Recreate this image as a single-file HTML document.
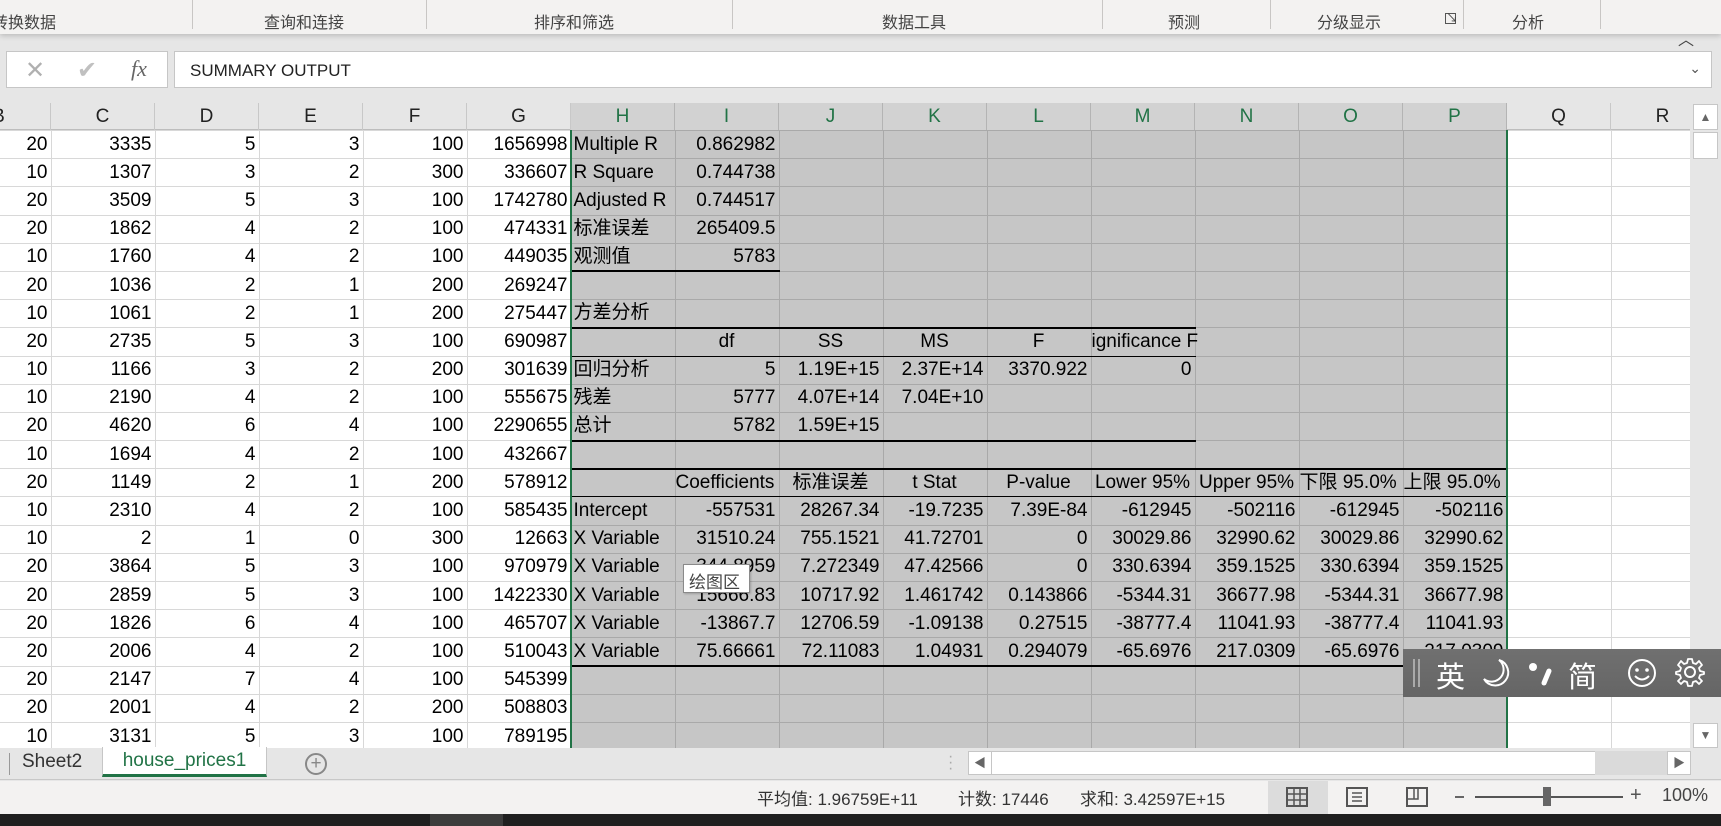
<!DOCTYPE html>
<html><head><meta charset="utf-8"><style>
*{margin:0;padding:0;box-sizing:border-box}
body{width:1721px;height:826px;overflow:hidden;background:#e6e6e6;font-family:"Liberation Sans","Noto Sans CJK SC",sans-serif;position:relative;color:#000}
.abs{position:absolute}
#rib{left:0;top:0;width:1721px;height:34px;background:#f3f2f1;box-shadow:0 2px 5px rgba(0,0,0,.18)}
.rl{position:absolute;top:9px;font-size:16px;color:#444;white-space:nowrap}
.sep{position:absolute;top:0;width:1px;height:29px;background:#c8c6c4}
#nb{left:6px;top:51px;width:162px;height:37px;background:#fff;border:1px solid #c6c6c6}
#fi{left:174px;top:51px;width:1538px;height:37px;background:#fff;border:1px solid #c6c6c6;font-size:17px;color:#222;padding:9px 0 0 15px}
#hdr{left:0;top:103px;width:1690px;height:27px;background:#e6e6e6;border-bottom:1px solid #bdbdbd}
.ch{position:absolute;top:0;height:27px;border-right:1px solid #c8c8c8;font-size:19px;color:#222;text-align:center;line-height:28px}
.ch.s{background:#d2d2d2;color:#217346;border-right-color:#b4b4b4}
#grid{left:0;top:130px;width:1690px;height:618px;overflow:hidden;background:#fff}
table{border-collapse:collapse;table-layout:fixed;font-size:19px;width:1715px}
td{height:28.2px;border:1px solid #d8d8d8;text-align:right;padding:0 3px 0 2px;white-space:nowrap;overflow:hidden;line-height:26px}
td:first-child{border-left:none}
td:nth-child(n+7):nth-child(-n+15){background:#c6c6c6;border-color:#a9a9a9}
td.l{text-align:left}
td.c{text-align:center}
td.v{overflow:visible}
tr.b1 td:nth-child(n+7):nth-child(-n+8){border-bottom:2px solid #000}
tr.b2 td:nth-child(n+7):nth-child(-n+12){border-bottom:2px solid #000}
tr.b3 td:nth-child(n+7):nth-child(-n+12){border-bottom:1px solid #000}
tr.b4 td:nth-child(n+7):nth-child(-n+15){border-bottom:2px solid #000}
tr.b5 td:nth-child(n+7):nth-child(-n+15){border-bottom:1px solid #000}
.gl{width:2px;background:#217346;top:130px;height:618px}
#vs{left:1690px;top:103px;width:31px;height:645px;background:#e6e6e6}
#tabs{left:0;top:748px;width:1721px;height:32px;background:#e6e6e6;border-bottom:1px solid #c8c8c8}
#stat{left:0;top:781px;width:1721px;height:33px;background:#f3f2f1;font-size:16px;color:#333}
#task{left:0;top:814px;width:1721px;height:12px;background:#1f1f1f}
#ime{left:1403px;top:649px;width:318px;height:48px;background:linear-gradient(#707070,#656565);color:#fff;font-size:29px}
</style></head><body>
<div id="rib" class="abs">
<div class="rl" style="left:-8px">转换数据</div>
<div class="sep" style="left:192px"></div>
<div class="rl" style="left:264px">查询和连接</div>
<div class="sep" style="left:426px"></div>
<div class="rl" style="left:534px">排序和筛选</div>
<div class="sep" style="left:732px"></div>
<div class="rl" style="left:882px">数据工具</div>
<div class="sep" style="left:1102px"></div>
<div class="rl" style="left:1168px">预测</div>
<div class="sep" style="left:1270px"></div>
<div class="rl" style="left:1317px">分级显示</div>
<div class="rl" style="left:1445px;font-size:12px;top:13px;border:1px solid #555;width:11px;height:11px;line-height:9px;text-align:center">↘</div>
<div class="sep" style="left:1463px"></div>
<div class="rl" style="left:1512px">分析</div>
<div class="sep" style="left:1600px"></div>
</div>
<div class="abs" style="left:1678px;top:26px;font-size:16px;color:#444">︿</div>
<div id="nb" class="abs">
<span class="abs" style="left:18px;top:4px;font-size:24px;color:#b0b0b0">✕</span>
<span class="abs" style="left:70px;top:4px;font-size:24px;color:#c0c0c0">✔</span>
<span class="abs" style="left:124px;top:4px;font-size:22px;color:#666;font-style:italic;font-family:'Liberation Serif',serif">fx</span>
</div>
<div id="fi" class="abs">SUMMARY OUTPUT<span class="abs" style="right:10px;top:8px;font-size:14px;color:#555">⌄</span></div>
<div id="hdr" class="abs">
<div class="ch" style="left:-53px;width:104px">B</div>
<div class="ch" style="left:51px;width:104px">C</div>
<div class="ch" style="left:155px;width:104px">D</div>
<div class="ch" style="left:259px;width:104px">E</div>
<div class="ch" style="left:363px;width:104px">F</div>
<div class="ch" style="left:467px;width:104px">G</div>
<div class="ch s" style="left:571px;width:104px">H</div>
<div class="ch s" style="left:675px;width:104px">I</div>
<div class="ch s" style="left:779px;width:104px">J</div>
<div class="ch s" style="left:883px;width:104px">K</div>
<div class="ch s" style="left:987px;width:104px">L</div>
<div class="ch s" style="left:1091px;width:104px">M</div>
<div class="ch s" style="left:1195px;width:104px">N</div>
<div class="ch s" style="left:1299px;width:104px">O</div>
<div class="ch s" style="left:1403px;width:104px">P</div>
<div class="ch" style="left:1507px;width:104px">Q</div>
<div class="ch" style="left:1611px;width:104px">R</div>
</div>
<div id="grid" class="abs">
<table>
<colgroup><col style="width:51px"><col style="width:104px"><col style="width:104px"><col style="width:104px"><col style="width:104px"><col style="width:104px"><col style="width:104px"><col style="width:104px"><col style="width:104px"><col style="width:104px"><col style="width:104px"><col style="width:104px"><col style="width:104px"><col style="width:104px"><col style="width:104px"><col style="width:104px"><col style="width:104px"></colgroup>
<tr><td>20<td>3335<td>5<td>3<td>100<td>1656998<td class="l">Multiple R<td>0.862982<td><td><td><td><td><td><td><td><td></tr>
<tr><td>10<td>1307<td>3<td>2<td>300<td>336607<td class="l">R Square<td>0.744738<td><td><td><td><td><td><td><td><td></tr>
<tr><td>20<td>3509<td>5<td>3<td>100<td>1742780<td class="l">Adjusted R<td>0.744517<td><td><td><td><td><td><td><td><td></tr>
<tr><td>20<td>1862<td>4<td>2<td>100<td>474331<td class="l">标准误差<td>265409.5<td><td><td><td><td><td><td><td><td></tr>
<tr class="b1"><td>10<td>1760<td>4<td>2<td>100<td>449035<td class="l">观测值<td>5783<td><td><td><td><td><td><td><td><td></tr>
<tr><td>20<td>1036<td>2<td>1<td>200<td>269247<td><td><td><td><td><td><td><td><td><td><td></tr>
<tr class="b2"><td>10<td>1061<td>2<td>1<td>200<td>275447<td class="l">方差分析<td><td><td><td><td><td><td><td><td><td></tr>
<tr class="b3"><td>20<td>2735<td>5<td>3<td>100<td>690987<td><td class="c">df<td class="c">SS<td class="c">MS<td class="c">F<td class="l v" style="padding-left:0">ignificance F<td><td><td><td><td></tr>
<tr><td>10<td>1166<td>3<td>2<td>200<td>301639<td class="l">回归分析<td>5<td>1.19E+15<td>2.37E+14<td>3370.922<td>0<td><td><td><td><td></tr>
<tr><td>10<td>2190<td>4<td>2<td>100<td>555675<td class="l">残差<td>5777<td>4.07E+14<td>7.04E+10<td><td><td><td><td><td><td></tr>
<tr class="b2"><td>20<td>4620<td>6<td>4<td>100<td>2290655<td class="l">总计<td>5782<td>1.59E+15<td><td><td><td><td><td><td><td></tr>
<tr class="b4"><td>10<td>1694<td>4<td>2<td>100<td>432667<td><td><td><td><td><td><td><td><td><td><td></tr>
<tr class="b5"><td>20<td>1149<td>2<td>1<td>200<td>578912<td><td class="l" style="padding-left:0">Coefficients<td class="c">标准误差<td class="c">t Stat<td class="c">P-value<td class="c">Lower 95%<td class="c">Upper 95%<td class="l" style="padding:0">下限 95.0%<td class="l" style="padding:0">上限 95.0%<td><td></tr>
<tr><td>10<td>2310<td>4<td>2<td>100<td>585435<td class="l">Intercept<td>-557531<td>28267.34<td>-19.7235<td>7.39E-84<td>-612945<td>-502116<td>-612945<td>-502116<td><td></tr>
<tr><td>10<td>2<td>1<td>0<td>300<td>12663<td class="l">X Variable<td>31510.24<td>755.1521<td>41.72701<td>0<td>30029.86<td>32990.62<td>30029.86<td>32990.62<td><td></tr>
<tr><td>20<td>3864<td>5<td>3<td>100<td>970979<td class="l">X Variable<td>344.8959<td>7.272349<td>47.42566<td>0<td>330.6394<td>359.1525<td>330.6394<td>359.1525<td><td></tr>
<tr><td>20<td>2859<td>5<td>3<td>100<td>1422330<td class="l">X Variable<td>15666.83<td>10717.92<td>1.461742<td>0.143866<td>-5344.31<td>36677.98<td>-5344.31<td>36677.98<td><td></tr>
<tr><td>20<td>1826<td>6<td>4<td>100<td>465707<td class="l">X Variable<td>-13867.7<td>12706.59<td>-1.09138<td>0.27515<td>-38777.4<td>11041.93<td>-38777.4<td>11041.93<td><td></tr>
<tr class="b4"><td>20<td>2006<td>4<td>2<td>100<td>510043<td class="l">X Variable<td>75.66661<td>72.11083<td>1.04931<td>0.294079<td>-65.6976<td>217.0309<td>-65.6976<td>217.0309<td><td></tr>
<tr><td>20<td>2147<td>7<td>4<td>100<td>545399<td><td><td><td><td><td><td><td><td><td><td></tr>
<tr><td>20<td>2001<td>4<td>2<td>200<td>508803<td><td><td><td><td><td><td><td><td><td><td></tr>
<tr><td>10<td>3131<td>5<td>3<td>100<td>789195<td><td><td><td><td><td><td><td><td><td><td></tr>
</table>
</div>
<div class="abs gl" style="left:570px"></div>
<div class="abs gl" style="left:1506px"></div>
<div class="abs" style="left:683px;top:564px;width:67px;height:29px;background:#fff;border:1px solid #8a8a8a;font-size:17px;color:#444;padding:3px 0 0 5px;box-shadow:1px 1px 2px rgba(0,0,0,.2)">绘图区</div>
<div id="vs" class="abs">
<div class="abs" style="left:3px;top:1px;width:25px;height:26px;background:#fff;border:1px solid #c6c6c6;font-size:12px;color:#666;text-align:center;line-height:24px">▲</div>
<div class="abs" style="left:3px;top:29px;width:25px;height:27px;background:#fff;border:1px solid #c6c6c6"></div>
<div class="abs" style="left:3px;top:620px;width:25px;height:25px;background:#fff;border:1px solid #c6c6c6;font-size:12px;color:#666;text-align:center;line-height:22px">▼</div>
</div>
<div id="tabs" class="abs">
<div class="abs" style="left:9px;top:5px;width:1px;height:22px;background:#999"></div>
<div class="abs" style="left:22px;top:3px;font-size:19px;color:#333">Sheet2</div>
<div class="abs" style="left:102px;top:-1px;width:165px;height:30px;background:#fff;border-left:1px solid #c6c6c6;border-right:1px solid #c6c6c6;border-bottom:3px solid #217346;font-size:19px;color:#217346;text-align:center;line-height:27px">house_prices1</div>
<div class="abs" style="left:305px;top:5px;width:22px;height:22px;border:2px solid #888;border-radius:50%;font-size:19px;color:#888;text-align:center;line-height:17px">+</div>
<div class="abs" style="left:948px;top:6px;font-size:16px;color:#aaa;line-height:6px">·<br>·<br>·</div>
<div class="abs" style="left:968px;top:3px;width:722px;height:24px;background:#fff;border:1px solid #c6c6c6"></div>
<div class="abs" style="left:968px;top:3px;width:24px;height:24px;border:1px solid #c6c6c6;background:#fff;font-size:12px;color:#666;text-align:center;line-height:22px">◀</div>
<div class="abs" style="left:1595px;top:3px;width:72px;height:24px;background:#dadada"></div>
<div class="abs" style="left:1667px;top:3px;width:24px;height:24px;border:1px solid #c6c6c6;background:#fff;font-size:12px;color:#666;text-align:center;line-height:22px">▶</div>
</div>
<div id="stat" class="abs">
<span class="abs" style="left:757px;top:4px;font-size:17px">平均值: 1.96759E+11</span>
<span class="abs" style="left:958px;top:4px;font-size:17px">计数: 17446</span>
<span class="abs" style="left:1080px;top:4px;font-size:17px">求和: 3.42597E+15</span>
<div class="abs" style="left:1268px;top:0;width:60px;height:33px;background:#dcdcdc"></div>
<svg class="abs" style="left:1286px;top:6px" width="22" height="20"><rect x="1" y="1" width="20" height="18" fill="none" stroke="#555" stroke-width="2"/><path d="M8 1V19M14 1V19M1 7H21M1 13H21" stroke="#555" stroke-width="1.5"/></svg>
<svg class="abs" style="left:1346px;top:6px" width="22" height="20"><rect x="1" y="1" width="20" height="18" fill="none" stroke="#555" stroke-width="2"/><path d="M6 6H16M6 10H16M6 14H16" stroke="#555" stroke-width="1.5"/></svg>
<svg class="abs" style="left:1406px;top:6px" width="22" height="20"><rect x="1" y="1" width="20" height="18" fill="none" stroke="#555" stroke-width="2"/><path d="M1 12H12V1M8 1V12" stroke="#555" stroke-width="1.5" fill="none"/></svg>
<div class="abs" style="left:1455px;top:15px;width:9px;height:2px;background:#666"></div>
<div class="abs" style="left:1475px;top:15px;width:148px;height:2px;background:#555"></div>
<div class="abs" style="left:1543px;top:6px;width:8px;height:19px;background:#666"></div>
<span class="abs" style="left:1630px;top:3px;font-size:20px;color:#555">+</span>
<span class="abs" style="left:1662px;top:4px;font-size:18px;color:#444">100%</span>
</div>
<div id="task" class="abs"><div class="abs" style="left:430px;top:0;width:73px;height:12px;background:#3c3c3c"></div></div>
<div id="ime" class="abs">
<div class="abs" style="left:10px;top:10px;width:2px;height:28px;background:#aaa"></div>
<div class="abs" style="left:15px;top:10px;width:2px;height:28px;background:#aaa"></div>
<span class="abs" style="left:33px;top:5px">英</span>
<svg class="abs" style="left:78px;top:8px" width="32" height="32"><path d="M18 3A13 13 0 1 1 3 22 11 11 0 0 0 18 3Z" fill="none" stroke="#fff" stroke-width="2"/></svg>
<svg class="abs" style="left:124px;top:10px" width="30" height="28"><circle cx="6" cy="8" r="4" fill="#fff"/><path d="M22 12L17 24" stroke="#fff" stroke-width="5" stroke-linecap="round"/></svg>
<span class="abs" style="left:165px;top:5px">简</span>
<svg class="abs" style="left:224px;top:9px" width="32" height="32"><circle cx="15" cy="15" r="13" fill="none" stroke="#fff" stroke-width="2"/><circle cx="10" cy="12" r="1.8" fill="#fff"/><circle cx="20" cy="12" r="1.8" fill="#fff"/><path d="M8 18Q15 25 22 18" fill="none" stroke="#fff" stroke-width="2"/></svg>
<svg class="abs" style="left:272px;top:8px" width="32" height="32"><circle cx="15" cy="15" r="5" fill="none" stroke="#fff" stroke-width="2"/><path d="M13 2H17L18 6L21 7L24 4L27 8L24 11L25 14L29 15V17L25 18L24 21L27 24L24 27L21 24L18 25L17 29H13L12 25L9 24L6 27L3 24L6 21L5 18L1 17V15L5 14L6 11L3 8L6 4L9 7L12 6Z" fill="none" stroke="#fff" stroke-width="1.8" stroke-linejoin="round"/></svg>
</div>
</body></html>
